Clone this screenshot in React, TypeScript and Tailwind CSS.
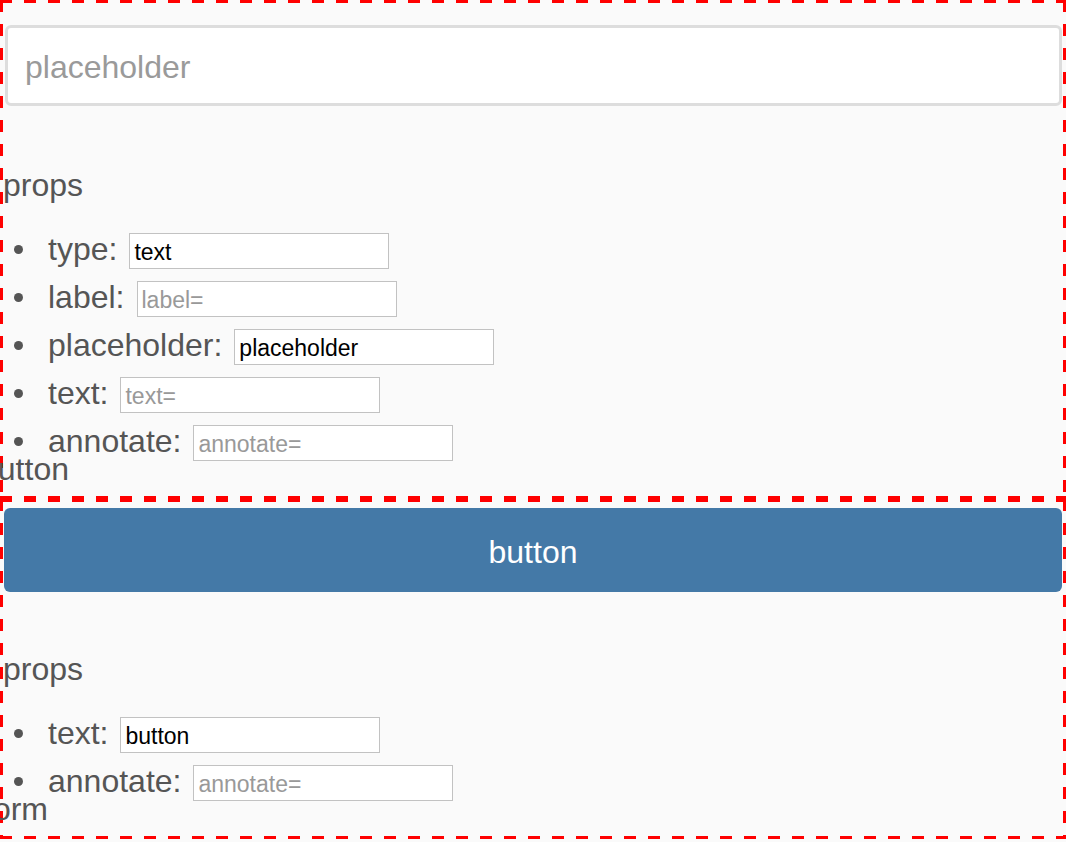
import type { ReactNode } from "react";

const rowsA = [
  { name: "type", value: "text" },
  { name: "label", value: "" },
  { name: "placeholder", value: "placeholder" },
  { name: "text", value: "" },
  { name: "annotate", value: "" },
];

const rowsB = [
  { name: "text", value: "button" },
  { name: "annotate", value: "" },
];

// dashed red frame drawn with gradients so the dashes come out 12px long like the reference
function Frame({ children, bottom }: { children: ReactNode; bottom: string }) {
  return (
    <div className={`p-[3px] ${bottom} bg-no-repeat [background-image:repeating-linear-gradient(90deg,#f00_0_12px,transparent_12px_24px),repeating-linear-gradient(90deg,#f00_0_12px,transparent_12px_24px),repeating-linear-gradient(180deg,#f00_0_12px,transparent_12px_24px),repeating-linear-gradient(180deg,#f00_0_12px,transparent_12px_24px)] [background-size:100%_3px,100%_3px,3px_100%,3px_100%] [background-position:0_0,0_100%,0_0,100%_0]`}>
      {children}
    </div>
  );
}

function PropRow({ name, value }: { name: string; value: string }) {
  return (
    <li className="flex items-baseline h-12">
      <span className="self-center ml-[11px] mr-[25px] w-[9px] h-[9px] rounded-full bg-[#555]" />
      <span className="text-[32px] leading-[48px]">{name}:</span>
      <input
        className="ml-3 w-[260px] h-9 px-1 pt-1 border border-[#c2c2c2] bg-white text-black text-[23px] placeholder:text-[#999] outline-none"
        defaultValue={value}
        placeholder={`${name}=`}
      />
    </li>
  );
}

function Props({ rows, gap }: { rows: { name: string; value: string }[]; gap: string }) {
  return (
    <>
      <h2 className={`${gap} text-[32px] leading-9 font-normal`}>props</h2>
      <ul className="mt-[22px]">
        {rows.map((r) => (
          <PropRow key={r.name} name={r.name} value={r.value} />
        ))}
      </ul>
    </>
  );
}

export default function App() {
  return (
    <div className="min-h-screen bg-[#fafafa] text-[#555] font-['Liberation_Sans',Arial,sans-serif]">
      <Frame bottom="pb-[12px]">
        <input
          className="mt-[22px] ml-[2px] w-[calc(100%-3px)] h-[81px] block border-[3px] border-[#dddddd] rounded-[6px] bg-white pl-[17px] pt-1 text-[32px] text-black placeholder:text-[#9a9a9a] outline-none"
          placeholder="placeholder"
        />
        <Props rows={rowsA} gap="mt-[61px]" />
        <div className="-mt-[14px] -ml-[23px] text-[32px] leading-9">button</div>
      </Frame>
      <Frame bottom="pb-[12px]">
        <button className="mt-[6px] ml-px w-[calc(100%-2px)] h-[84px] block pt-1 rounded-[6px] bg-[#4479a7] text-white text-[32px]">
          button
        </button>
        <Props rows={rowsB} gap="mt-[59px]" />
        <div className="-mt-[14px] -ml-[19px] text-[32px] leading-9">form</div>
      </Frame>
    </div>
  );
}
